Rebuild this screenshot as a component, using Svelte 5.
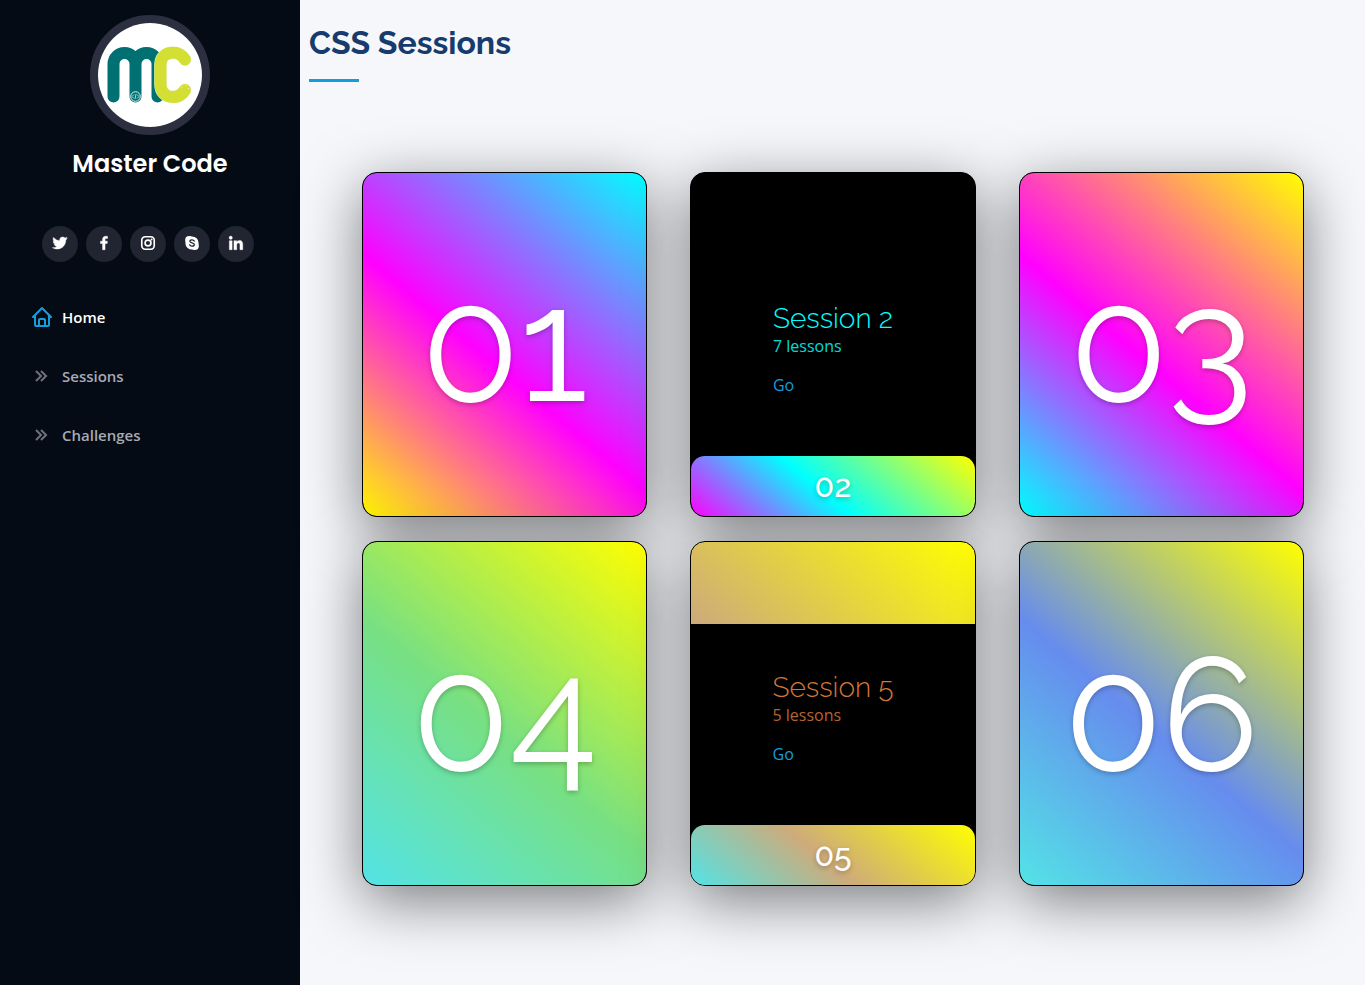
<script>
  const socials = ['Twitter', 'Facebook', 'Instagram', 'Skype', 'LinkedIn'];

  const links = [
    { label: 'Home', active: true },
    { label: 'Sessions', active: false },
    { label: 'Challenges', active: false }
  ];

  const sessions = [
    { id: 1, tone: 'sunset', open: false },
    { id: 2, tone: 'lagoon', open: true, lessons: 7 },
    { id: 3, tone: 'candy', open: false },
    { id: 4, tone: 'meadow', open: false },
    { id: 5, tone: 'amber', open: true, lessons: 5 },
    { id: 6, tone: 'iris', open: false }
  ];
</script>

<div class="layout">
  <header class="sidebar">
    <div class="profile">
      <svg class="avatar" viewBox="0 0 104 104" role="img" aria-label="Master Code logo">
        <rect width="104" height="104" fill="#fff" />
        <g fill="none" stroke-linecap="round">
          <path d="M15.500 73.500V41a11 11 0 0 1 22 0V73.500M37.500 41a11 11 0 0 1 22 0V73.500" stroke="#007073" stroke-width="12" />
          <path d="M87 36.500C83.500 31 79.500 29.700 75 29.700C67 29.700 62.500 35 62.500 42V61C62.500 68.500 67 74 75 74C79.500 74 83.500 72.500 87 67" stroke="#e6efc0" stroke-width="12.600" />
          <path d="M87 36.500C83.500 31 79.500 29.700 75 29.700C67 29.700 62.500 35 62.500 42V61C62.500 68.500 67 74 75 74C79.500 74 83.500 72.500 87 67" stroke="#d3df33" stroke-width="11.800" />
        </g>
        <circle cx="37.500" cy="73.500" r="4.800" fill="#007073" stroke="#d9eeee" stroke-width="1" />
        <path d="M36 71.500l-2 2 2 2M39 71.500l2 2-2 2M38 71l-1 5" fill="none" stroke="#d9eeee" stroke-width=".8" />
        <g fill="#fff">
          <circle cx="84" cy="64" r=".5" /><circle cx="88" cy="62.500" r=".5" /><circle cx="90.500" cy="65.500" r=".5" />
        </g>
      </svg>
      <h1>Master Code</h1>
      <div class="socials">
        {#each socials as name}
          <a href="#{name.toLowerCase()}" aria-label={name}>
            <svg viewBox="0 0 24 24" fill="currentColor" aria-hidden="true">
              {#if name === 'Twitter'}
                <path d="M19.633 7.997c.013.175.013.349.013.523 0 5.325-4.053 11.461-11.460 11.461-2.282 0-4.402-.661-6.186-1.809.324.037.636.05.973.05a8.070 8.070 0 0 0 5.001-1.721 4.036 4.036 0 0 1-3.767-2.793c.249.037.499.062.761.062.361 0 .724-.05 1.061-.137a4.027 4.027 0 0 1-3.230-3.953v-.05c.537.299 1.160.486 1.820.511a4.022 4.022 0 0 1-1.796-3.354c0-.748.199-1.434.548-2.032a11.457 11.457 0 0 0 8.306 4.215c-.062-.3-.1-.611-.1-.923a4.026 4.026 0 0 1 4.028-4.028c1.160 0 2.207.486 2.943 1.272a7.957 7.957 0 0 0 2.556-.973 4.020 4.020 0 0 1-1.771 2.220 8.073 8.073 0 0 0 2.319-.624 8.645 8.645 0 0 1-2.019 2.083z" stroke="currentColor" stroke-width=".6" />
              {:else if name === 'Facebook'}
                <path d="M13.397 20.997v-8.196h2.765l.411-3.209h-3.176V7.548c0-.926.258-1.560 1.587-1.560h1.684V3.127A22.336 22.336 0 0 0 14.201 3c-2.444 0-4.122 1.492-4.122 4.231v2.355H7.332v3.209h2.753v8.202h3.312z" stroke="currentColor" stroke-width=".6" />
              {:else if name === 'Instagram'}
                <rect x="3.700" y="3.700" width="16.600" height="16.600" rx="4.500" fill="none" stroke="currentColor" stroke-width="2.200" />
                <circle cx="12" cy="12" r="3.900" fill="none" stroke="currentColor" stroke-width="2.200" />
                <circle cx="16.800" cy="7.200" r="1.300" />
              {:else if name === 'Skype'}
                <circle cx="12" cy="12" r="8.800" />
                <circle cx="8.200" cy="8" r="5.300" />
                <circle cx="15.800" cy="16" r="5.300" />
                <path d="M15 9.400c-.6-1.300-1.700-1.700-3-1.700-1.700 0-2.900.8-2.900 2 0 3 6 1.300 6 4.400 0 1.400-1.300 2.200-3.100 2.200-1.600 0-2.700-.6-3.200-1.900" fill="none" stroke="#212431" stroke-width="1.700" stroke-linecap="round" />
              {:else}
                <g stroke="currentColor" stroke-width=".5">
                  <circle cx="4.983" cy="5.009" r="2.188" />
                  <path d="M9.237 8.855v12.139h3.769v-6.003c0-1.584.298-3.118 2.262-3.118 1.937 0 1.961 1.811 1.961 3.218v5.904H21v-6.657c0-3.270-.704-5.783-4.526-5.783-1.835 0-3.065 1.007-3.568 1.960h-.051v-1.660H9.237zm-6.142 0H6.870v12.139H3.095z" />
                </g>
              {/if}
            </svg>
          </a>
        {/each}
      </div>
    </div>
    <nav>
      {#each links as link}
        <a href="#{link.label.toLowerCase()}" class:active={link.active}>
          <svg viewBox="0 0 24 24" fill="currentColor" aria-hidden="true">
            {#if link.active}
              <path d="M3 13h1v7c0 1.103.897 2 2 2h12c1.103 0 2-.897 2-2v-7h1a1 1 0 0 0 .707-1.707l-9-9a.999.999 0 0 0-1.414 0l-9 9A1 1 0 0 0 3 13zm7 7v-5h4v5h-4zm2-15.586 6 6V15l.001 5H16v-5c0-1.103-.897-2-2-2h-4c-1.103 0-2 .897-2 2v5H6v-9.586l6-6z" />
            {:else}
              <path d="M10.296 7.710 14.621 12l-4.325 4.290 1.408 1.420L17.461 12l-5.757-5.710z" />
              <path d="M6.704 6.290 5.296 7.710 9.621 12l-4.325 4.290 1.408 1.420L12.461 12z" />
            {/if}
          </svg>
          <span>{link.label}</span>
        </a>
      {/each}
    </nav>
  </header>

  <main>
    <h2>CSS Sessions</h2>
    <div class="cards">
      {#each sessions as s}
        <article class="card {s.tone}" class:open={s.open}>
          {#if s.open}
            <div class="details">
              <div class="copy">
                <h3>Session {s.id}</h3>
                <p>{s.lessons} lessons</p>
                <a href="#session-{s.id}">Go</a>
              </div>
            </div>
          {/if}
          <div class="face"><span>0{s.id}</span></div>
        </article>
      {/each}
    </div>
  </main>
</div>

<style>
  :global(body) {
    margin: 0;
    background: #f5f7fb;
    font-family: 'Open Sans', sans-serif;
    color: #272829;
  }

  .layout {
    display: flex;
    min-height: 100vh;
  }

  h1, h2, h3, p {
    margin: 0;
  }

  a {
    color: #149ddd;
    text-decoration: none;
  }

  .sidebar {
    box-sizing: border-box;
    flex: 0 0 300px;
    padding: 15px;
    background: #040b14;
  }

  .profile {
    display: flex;
    flex-direction: column;
    align-items: center;
  }

  .avatar {
    display: block;
    width: 104px;
    height: 104px;
    border: 8px solid #2c2f3f;
    border-radius: 50%;
  }

  h1 {
    margin-top: 14px;
    font: 600 24px/29px 'Poppins', sans-serif;
    color: #fff;
  }

  .socials {
    display: flex;
    gap: 8px;
    margin: 48px 4px 0 0;
  }

  .socials a {
    display: grid;
    place-items: center;
    width: 36px;
    height: 36px;
    border-radius: 50%;
    background: #212431;
    color: #fff;
  }

  .socials svg {
    width: 18px;
    height: 18px;
    margin-bottom: 2px;
  }

  nav {
    display: flex;
    flex-direction: column;
    margin-top: 25px;
  }

  nav a {
    display: flex;
    align-items: center;
    gap: 8px;
    height: 59px;
    padding: 0 15px;
    font-size: 15px;
    font-weight: 600;
    color: #a8a9b4;
  }

  nav svg {
    width: 24px;
    height: 24px;
    color: #6f7180;
  }

  nav a.active {
    color: #fff;
  }

  nav a.active svg {
    color: #149ddd;
  }

  main {
    flex: 1;
    min-width: 0;
    padding: 24px 0 60px;
  }

  h2 {
    margin-left: 9px;
    font: 700 32px/38px 'Raleway', sans-serif;
    color: #173b6c;
  }

  h2::after {
    content: '';
    display: block;
    width: 50px;
    height: 3px;
    margin-top: 17px;
    background: #149ddd;
  }

  .cards {
    display: grid;
    grid-template-columns: repeat(3, 1fr);
    gap: 24px 43px;
    margin-top: 90px;
    padding: 0 61px 0 62px;
  }

  .card {
    box-sizing: border-box;
    display: flex;
    flex-direction: column;
    min-height: 345px;
    overflow: hidden;
    border: 1px solid #000;
    border-radius: 15px;
    background: #000;
    box-shadow: 0 15px 60px rgba(0, 0, 0, 0.5);
  }

  .sunset { --paint: linear-gradient(40deg, #fff800, #f0f 45%, #0ff); }
  .lagoon { --paint: linear-gradient(40deg, #f0f, #0ff 45%, #ff0); }
  .candy { --paint: linear-gradient(40deg, #0ff, #f0f 45%, #ff0); }
  .meadow { --paint: linear-gradient(40deg, #53e3e6, #78e082 46%, #ff0); }
  .amber { --paint: linear-gradient(40deg, #53e3e6, #ceab7a 46%, #ff0); }
  .iris { --paint: linear-gradient(40deg, #53e3e6, #668cee 46%, #ff0); }

  .lagoon { --ink: #00ffff; }
  .amber { --ink: #d2773a; background: var(--paint); }

  .face {
    display: grid;
    place-items: center;
    flex: 1;
    border-radius: 14px;
    background: var(--paint);
    color: #fff;
    font-family: 'Raleway', sans-serif;
    font-size: 160px;
    font-weight: 400;
    line-height: 1;
    text-shadow: 0 2px 5px rgba(0, 0, 0, 0.25);
  }

  .open .face {
    position: relative;
    flex: 0 0 60px;
    font-size: 32px;
    font-weight: 500;
  }

  .details {
    flex: 1;
    display: flex;
    justify-content: center;
    margin: 82px 0 -15px;
    padding-top: 47px;
    background: #000;
    color: var(--ink);
  }

  h3 {
    font: 300 28px/33px 'Raleway', sans-serif;
  }

  .copy {
    font-size: 16px;
    line-height: 24px;
  }

  .copy p {
    margin-top: -1px;
    opacity: 0.85;
  }

  .copy a {
    display: inline-block;
    margin-top: 15px;
  }
</style>
